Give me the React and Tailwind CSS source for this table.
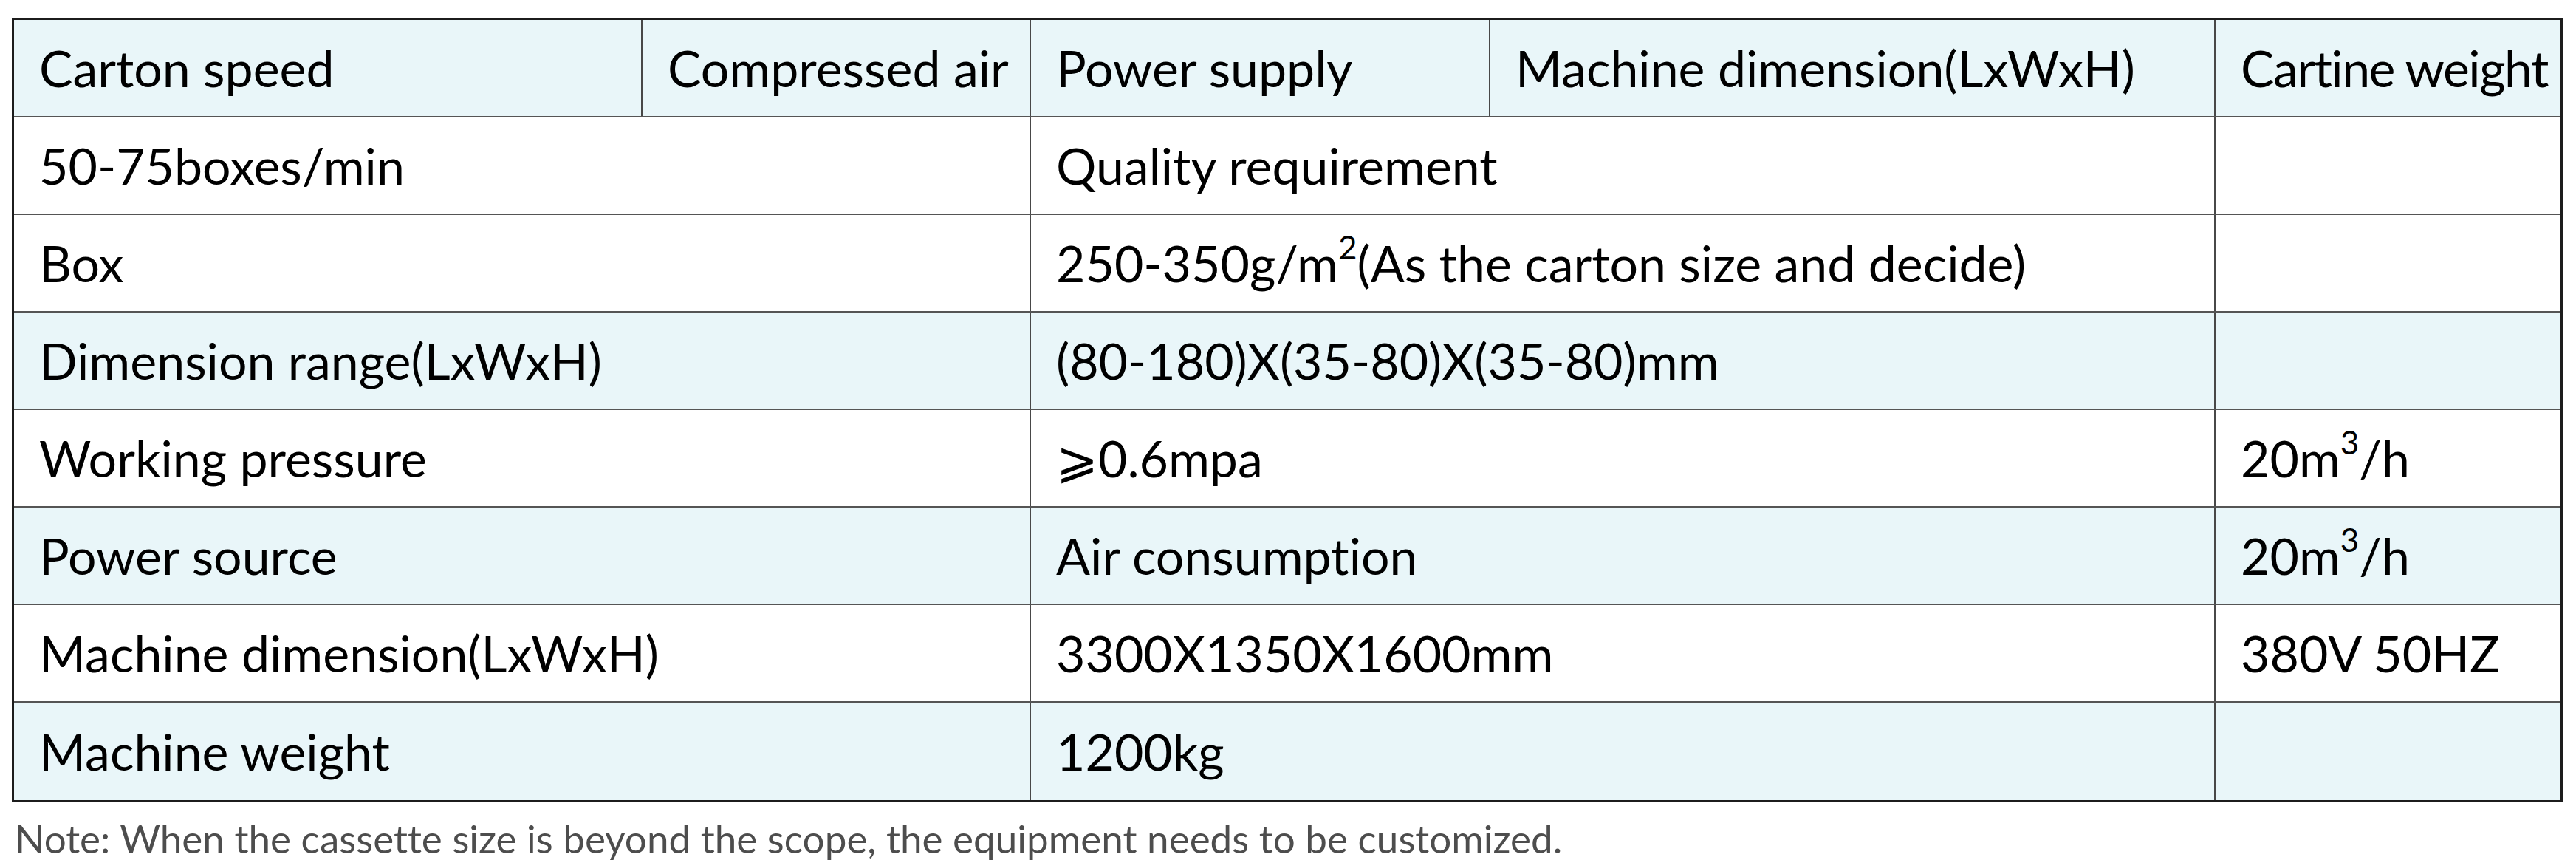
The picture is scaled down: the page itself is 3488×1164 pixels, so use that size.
import React from 'react';

const header = [
  { text: 'Carton speed', w: 'w-[851px]' },
  { text: 'Compressed air', w: 'w-[526px]' },
  { text: 'Power supply', w: 'w-[622px]' },
  { text: 'Machine dimension(LxWxH)', w: 'w-[982px]' },
  { text: 'Cartine weight', w: 'flex-1 tracking-[-1.5px]' },
];

const Sup = ({ children }) => (
  <span className="text-[44px] relative top-[-22px]">{children}</span>
);

const rows = [
  ['50-75boxes/min', 'Quality requirement', '', false],
  ['Box', <>250-350g/m<Sup>2</Sup>(As the carton size and decide)</>, '', false],
  ['Dimension range(LxWxH)', '(80-180)X(35-80)X(35-80)mm', '', true],
  ['Working pressure', '⩾0.6mpa', <>20m<Sup>3</Sup>/h</>, false],
  ['Power source', 'Air consumption', <>20m<Sup>3</Sup>/h</>, true],
  ['Machine dimension(LxWxH)', '3300X1350X1600mm', '380V 50HZ', false],
  ['Machine weight', '1200kg', '', true],
];

function Cell({ className, children }) {
  return (
    <div className={`flex items-center pl-[34px] whitespace-nowrap border-[#484848] ${className}`}>
      {children}
    </div>
  );
}

export default function App() {
  return (
    <div className="min-h-screen bg-white pt-[24px] pl-[16px] font-['Lato',sans-serif] text-black [font-variant-ligatures:none]">
      <div className="w-[3454px] border-[3px] border-[#1c1c1c]">
        <div className="flex h-[132px] bg-[#e9f6f9] border-b-2 border-[#555] text-[68px]">
          {header.map((h, i) => (
            <Cell key={i} className={`${h.w} ${i < 4 ? 'border-r-2' : ''}`}>
              {h.text}
            </Cell>
          ))}
        </div>
        {rows.map(([a, b, c, blue], i) => (
          <div
            key={i}
            className={`flex h-[132px] text-[68px] ${blue ? 'bg-[#e9f6f9]' : 'bg-white'} ${i < rows.length - 1 ? 'border-b-2 border-[#555]' : ''}`}
          >
            <Cell className="w-[1377px] border-r-2">{a}</Cell>
            <Cell className="w-[1604px] border-r-2">{b}</Cell>
            <Cell className="flex-1">{c}</Cell>
          </div>
        ))}
      </div>
      <p className="mt-[22px] pl-[4px] text-[53px] leading-none text-[#4d4d4d] whitespace-nowrap">
        Note: When the cassette size is beyond the scope, the equipment needs to be customized.
      </p>
    </div>
  );
}
